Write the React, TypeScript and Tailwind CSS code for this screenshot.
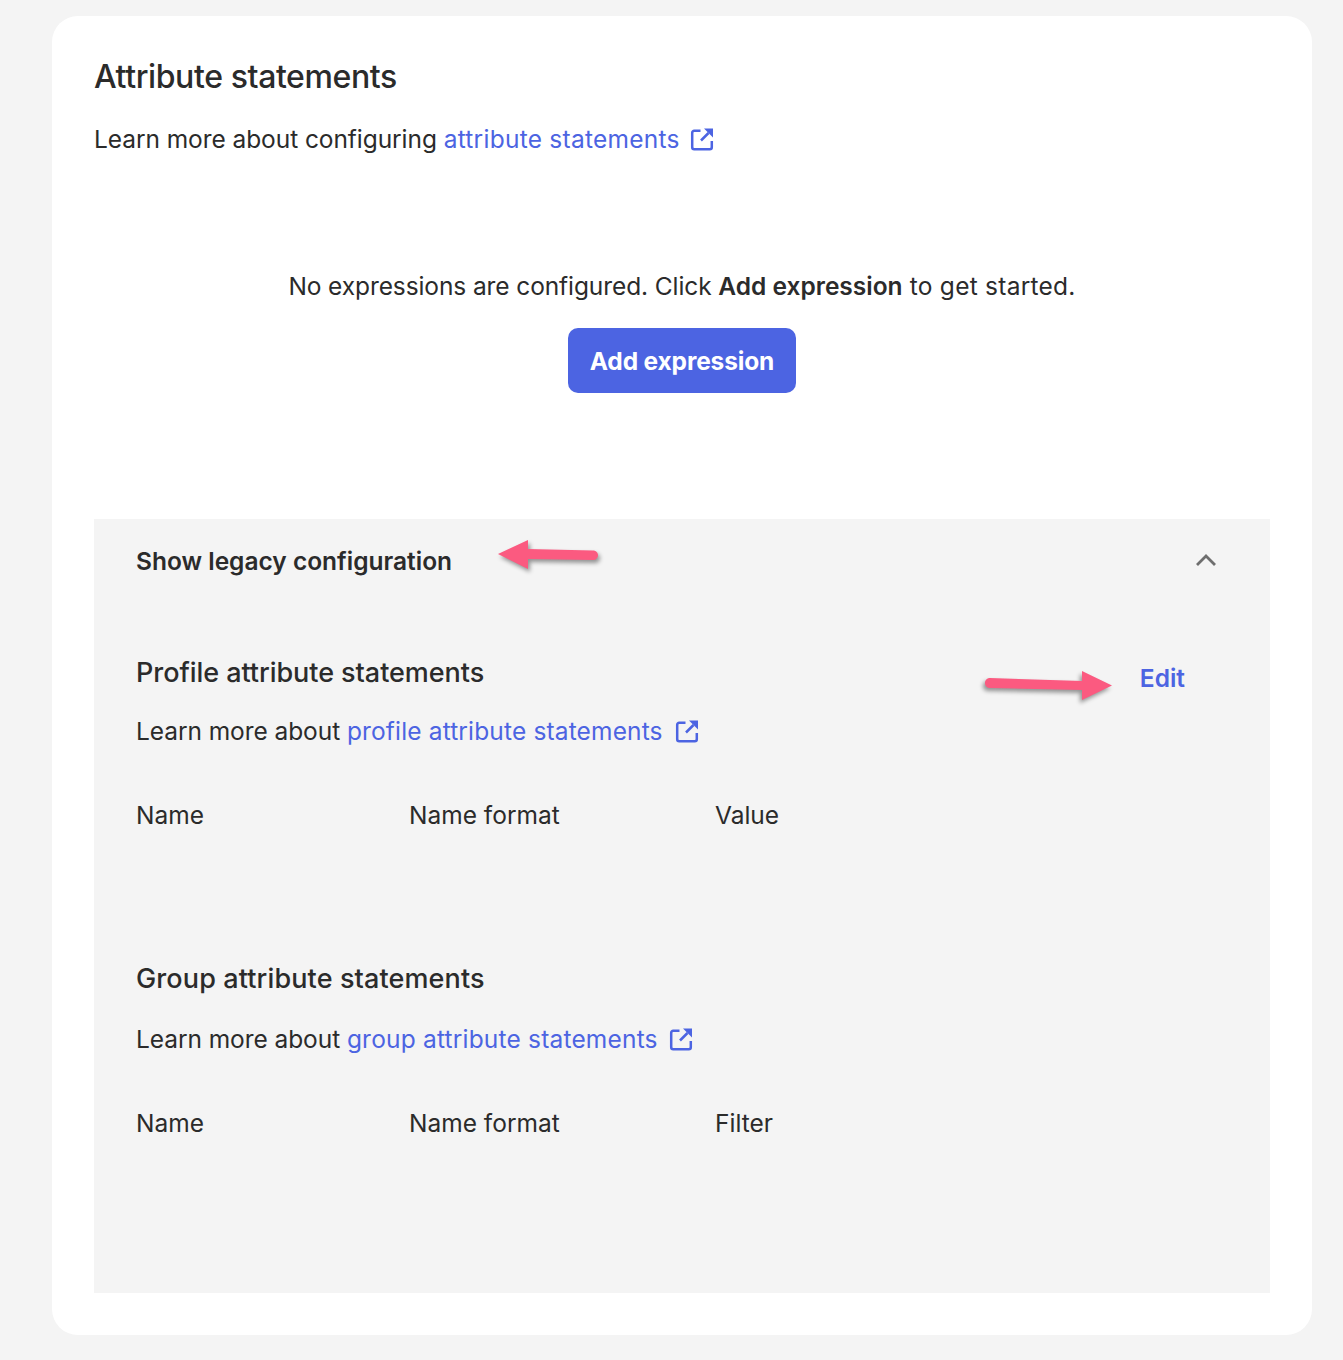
import React from 'react';

function ExternalIcon({ className }: { className?: string }) {
  return (
    <svg viewBox="0 0 24 24" fill="none" stroke="#4c64e2" strokeWidth="2.5" className={className}>
      <path d="M10.5 3.8H4.2a2 2 0 0 0-2 2v14.4a2 2 0 0 0 2 2h15.6a2 2 0 0 0 2-2V14" />
      <path d="M11 13.5 18.5 6" />
      <path d="M14 1.5h9v9z" fill="#4c64e2" stroke="none" />
    </svg>
  );
}

function LearnMore({ prefix, link, linkClass, iconClass }: { prefix: string; link: string; linkClass: string; iconClass: string }) {
  return (
    <p className="flex items-center text-[24.5px] leading-[32px] text-[#2b2b2b]">
      <span className="whitespace-pre tracking-[-0.07px]">{prefix}</span>
      <a className={`text-[#4c64e2] ${linkClass}`}>{link}</a>
      <ExternalIcon className={`w-6 h-6 ${iconClass}`} />
    </p>
  );
}

function LeftArrow() {
  return (
    <svg viewBox="0 0 106 38" className="absolute left-[402px] top-[19px] w-[106px] h-[38px] drop-shadow-[2px_3px_2px_rgba(0,0,0,0.4)]">
      <path d="M2 16 32 2v9l65 1.5c3 0 5 2.2 5 4.7s-2 4.8-5 4.8L32 21v10z" fill="#fb5a80" />
    </svg>
  );
}

function RightArrow() {
  return (
    <svg viewBox="0 0 134 38" className="absolute left-[889px] top-[149px] w-[134px] h-[38px] drop-shadow-[-2px_3px_2px_rgba(0,0,0,0.4)]">
      <path d="M7 10 99 13V3l30 14.5L99 32V22L7 20c-3 0-5-2.2-5-5s2-5 5-5z" fill="#fb5a80" />
    </svg>
  );
}

export default function App() {
  return (
    <div className="min-h-[1360px] bg-[#f4f4f4] pt-4 pl-[52px] pr-[31px] font-['Inter',sans-serif] text-[#2b2b2b]">
      <div className="bg-white rounded-[26px] h-[1319px] px-[42px] pt-[42px]">
        <h2 className="text-[32px] leading-[38px] font-medium tracking-[-0.4px]">Attribute statements</h2>
        <div className="mt-[27px]">
          <LearnMore prefix="Learn more about configuring " link="attribute statements" linkClass="tracking-[0.25px]" iconClass="ml-2.5" />
        </div>

        <div className="mt-[115px] flex flex-col items-center">
          <p className="text-[24.5px] leading-[32px] tracking-[-0.1px]">
            No expressions are configured. Click <strong className="font-semibold tracking-[0px]">Add expression</strong>
            <span className="tracking-[0.25px]"> to get started.</span>
          </p>
          <button className="mt-[26px] w-[228px] h-[65px] pt-[1px] bg-[#4c64e2] rounded-[10px] text-white text-[24.5px] font-bold tracking-[-0.15px]">
            Add expression
          </button>
        </div>

        <div className="relative mt-[126px] h-[774px] bg-[#f4f4f4] px-[42px] pt-[26px]">
          <div className="flex items-center justify-between pr-[10px]">
            <span className="text-[24.5px] leading-[32px] font-semibold tracking-[0px]">Show legacy configuration</span>
            <svg viewBox="0 0 24 24" fill="none" stroke="#6e6e6e" strokeWidth="2.8" className="w-6 h-6 -translate-y-px">
              <path d="M3 17 12 8l9 9" />
            </svg>
          </div>
          <LeftArrow />

          <div className="mt-[79px] flex items-start justify-between pr-[43px]">
            <h3 className="text-[27px] leading-[34px] font-medium tracking-[-0.05px]">Profile attribute statements</h3>
            <a className="mt-[6px] text-[#4c64e2] text-[24.5px] leading-[32px] font-semibold">Edit</a>
          </div>
          <RightArrow />
          <div className="mt-[21px]">
            <LearnMore prefix="Learn more about " link="profile attribute statements" linkClass="tracking-[0.15px]" iconClass="ml-3" />
          </div>
          <div className="mt-[52px] grid grid-cols-[273px_306px_1fr] text-[24.5px] leading-[32px]">
            <span>Name</span>
            <span>Name format</span>
            <span>Value</span>
          </div>

          <h3 className="mt-[131px] text-[27px] leading-[34px] font-medium tracking-[0.12px]">Group attribute statements</h3>
          <div className="mt-[27px]">
            <LearnMore prefix="Learn more about " link="group attribute statements" linkClass="tracking-[0.19px]" iconClass="ml-[11px]" />
          </div>
          <div className="mt-[52px] grid grid-cols-[273px_306px_1fr] text-[24.5px] leading-[32px]">
            <span>Name</span>
            <span>Name format</span>
            <span>Filter</span>
          </div>
        </div>
      </div>
    </div>
  );
}
